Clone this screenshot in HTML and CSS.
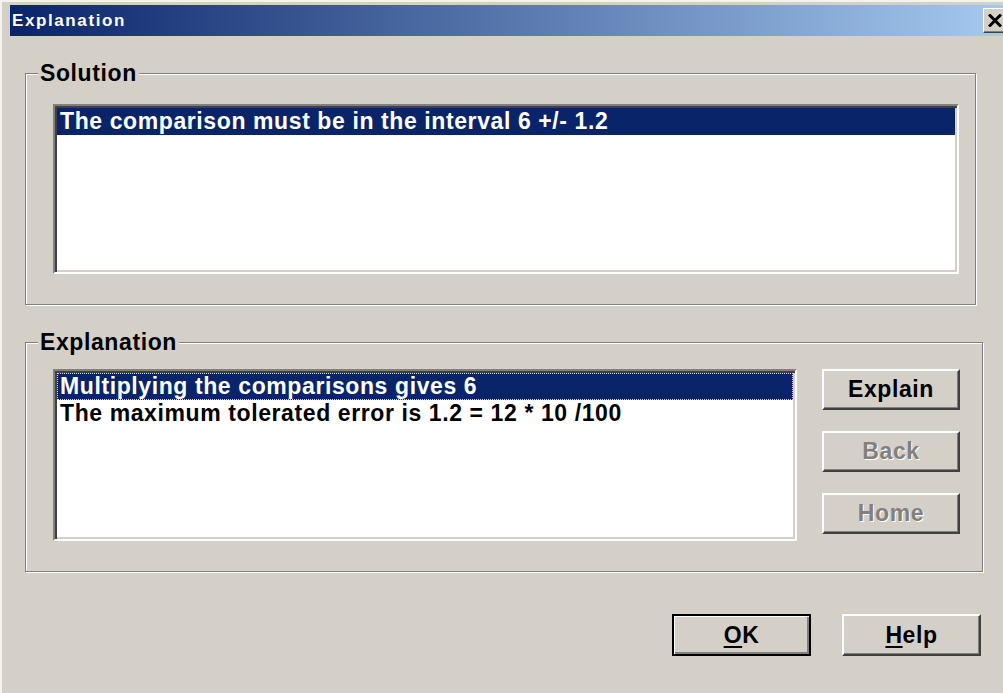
FILE: index.html
```html
<!DOCTYPE html>
<html lang="en">
<head>
<meta charset="utf-8">
<title>Explanation</title>
<link rel="stylesheet" href="styles.css">
</head>
<body>
<div class="window">
  <div class="titlebar">
    <span class="title">Explanation</span>
    <button class="close" aria-label="Close">
      <svg width="14" height="13" viewBox="0 0 14 13"><path d="M1 0.5 L13 12.5 M13 0.5 L1 12.5" stroke="#000" stroke-width="3" fill="none"/></svg>
    </button>
  </div>
  <div class="client">
    <div class="group group-solution">
      <div class="group-title">Solution</div>
      <div class="listbox listbox-solution">
        <div class="item selected">The comparison must be in the interval 6 +/- 1.2</div>
      </div>
    </div>
    <div class="group group-explanation">
      <div class="group-title">Explanation</div>
      <div class="explain-body">
        <div class="listbox listbox-explanation">
          <div class="item selected focused">Multiplying the comparisons gives 6</div>
          <div class="item">The maximum tolerated error is 1.2 = 12 * 10 /100</div>
        </div>
        <div class="side-buttons">
          <button class="btn">Explain</button>
          <button class="btn" disabled>Back</button>
          <button class="btn" disabled>Home</button>
        </div>
      </div>
    </div>
    <div class="dialog-buttons">
      <button class="btn btn-default"><u>O</u>K</button>
      <button class="btn"><u>H</u>elp</button>
    </div>
  </div>
</div>
</body>
</html>
```
FILE: styles.css
```css
html, body {
  margin: 0;
  padding: 0;
}

body {
  width: 1003px;
  height: 693px;
  overflow: hidden;
  background: #d4d0c8;
  font-family: "Liberation Sans", Arial, sans-serif;
  font-weight: bold;
  font-size: 23px;
  letter-spacing: 0.6px;
  color: #000;
}

/* window frame */
.window {
  width: 1010px;
  height: 700px;
  box-sizing: border-box;
  border-top: 2px solid #f4f3f0;
  border-left: 2px solid #f4f3f0;
  padding: 3px 0 0 8px;
}

.titlebar {
  height: 31px;
  display: flex;
  align-items: center;
  justify-content: space-between;
  padding-left: 2px;
  background: linear-gradient(to right, #0a246a, #a6caf0);
}

.title {
  color: #fff;
  font-size: 17px;
  letter-spacing: 1.6px;
}

.close {
  width: 24px;
  height: 25px;
  margin-right: 3px;
  padding: 0;
  display: flex;
  align-items: center;
  justify-content: center;
  background: #d4d0c8;
  border: 1px solid;
  border-color: #fff #404040 #404040 #fff;
  box-shadow: inset -1px -1px 0 #808080;
}

.client {
  padding: 37px 0 0 15px;
}

/* etched group boxes */
.group {
  box-sizing: border-box;
  border: 1px solid #808080;
  box-shadow: inset 1px 1px 0 #fff, 1px 1px 0 #fff;
  padding: 0 0 0 27px;
}

.group-solution {
  width: 951px;
  height: 232px;
}

.group-explanation {
  width: 958px;
  height: 230px;
  margin-top: 37px;
}

.group-title {
  width: fit-content;
  margin: -12px 0 0 -15px;
  padding: 0 2px;
  line-height: 22px;
  background: #d4d0c8;
}

/* sunken list boxes */
.listbox {
  box-sizing: border-box;
  background: #fff;
  border: 2px solid;
  border-color: #808080 #fff #fff #808080;
  box-shadow: inset 2px 2px 0 #404040, inset -2px -2px 0 #d4d0c8;
  padding: 2px;
}

.listbox-solution {
  width: 906px;
  height: 170px;
  margin-top: 20px;
}

.explain-body {
  display: flex;
  margin-top: 16px;
}

.listbox-explanation {
  width: 744px;
  height: 172px;
}

.item {
  line-height: 27px;
  height: 27px;
  padding-left: 3px;
  white-space: nowrap;
}

.item.selected {
  background: #0a246a;
  color: #fff;
}

.item.focused {
  outline: 1px dotted #f2dc8c;
  outline-offset: -1px;
}

.side-buttons {
  display: flex;
  flex-direction: column;
  gap: 21px;
  margin-left: 25px;
}

/* raised push buttons */
.btn {
  width: 138px;
  height: 41px;
  padding: 0;
  font: inherit;
  letter-spacing: inherit;
  color: #000;
  background: #d4d0c8;
  border: 2px solid;
  border-color: #fff #404040 #404040 #fff;
  box-shadow: inset -1px -1px 0 #808080;
}

.btn:disabled {
  color: #808080;
  text-shadow: 1px 1px 0 #fff;
}

.btn u {
  text-underline-offset: 3px;
  text-decoration-thickness: 2px;
}

.dialog-buttons {
  width: 958px;
  display: flex;
  justify-content: flex-end;
  gap: 31px;
  padding-right: 2px;
  margin-top: 42px;
  box-sizing: border-box;
}

.dialog-buttons .btn {
  width: 139px;
  height: 42px;
}

.btn-default {
  border: 2px solid #000;
  box-shadow: inset 1px 1px 0 #fff, inset -2px -2px 0 #808080;
}
```
